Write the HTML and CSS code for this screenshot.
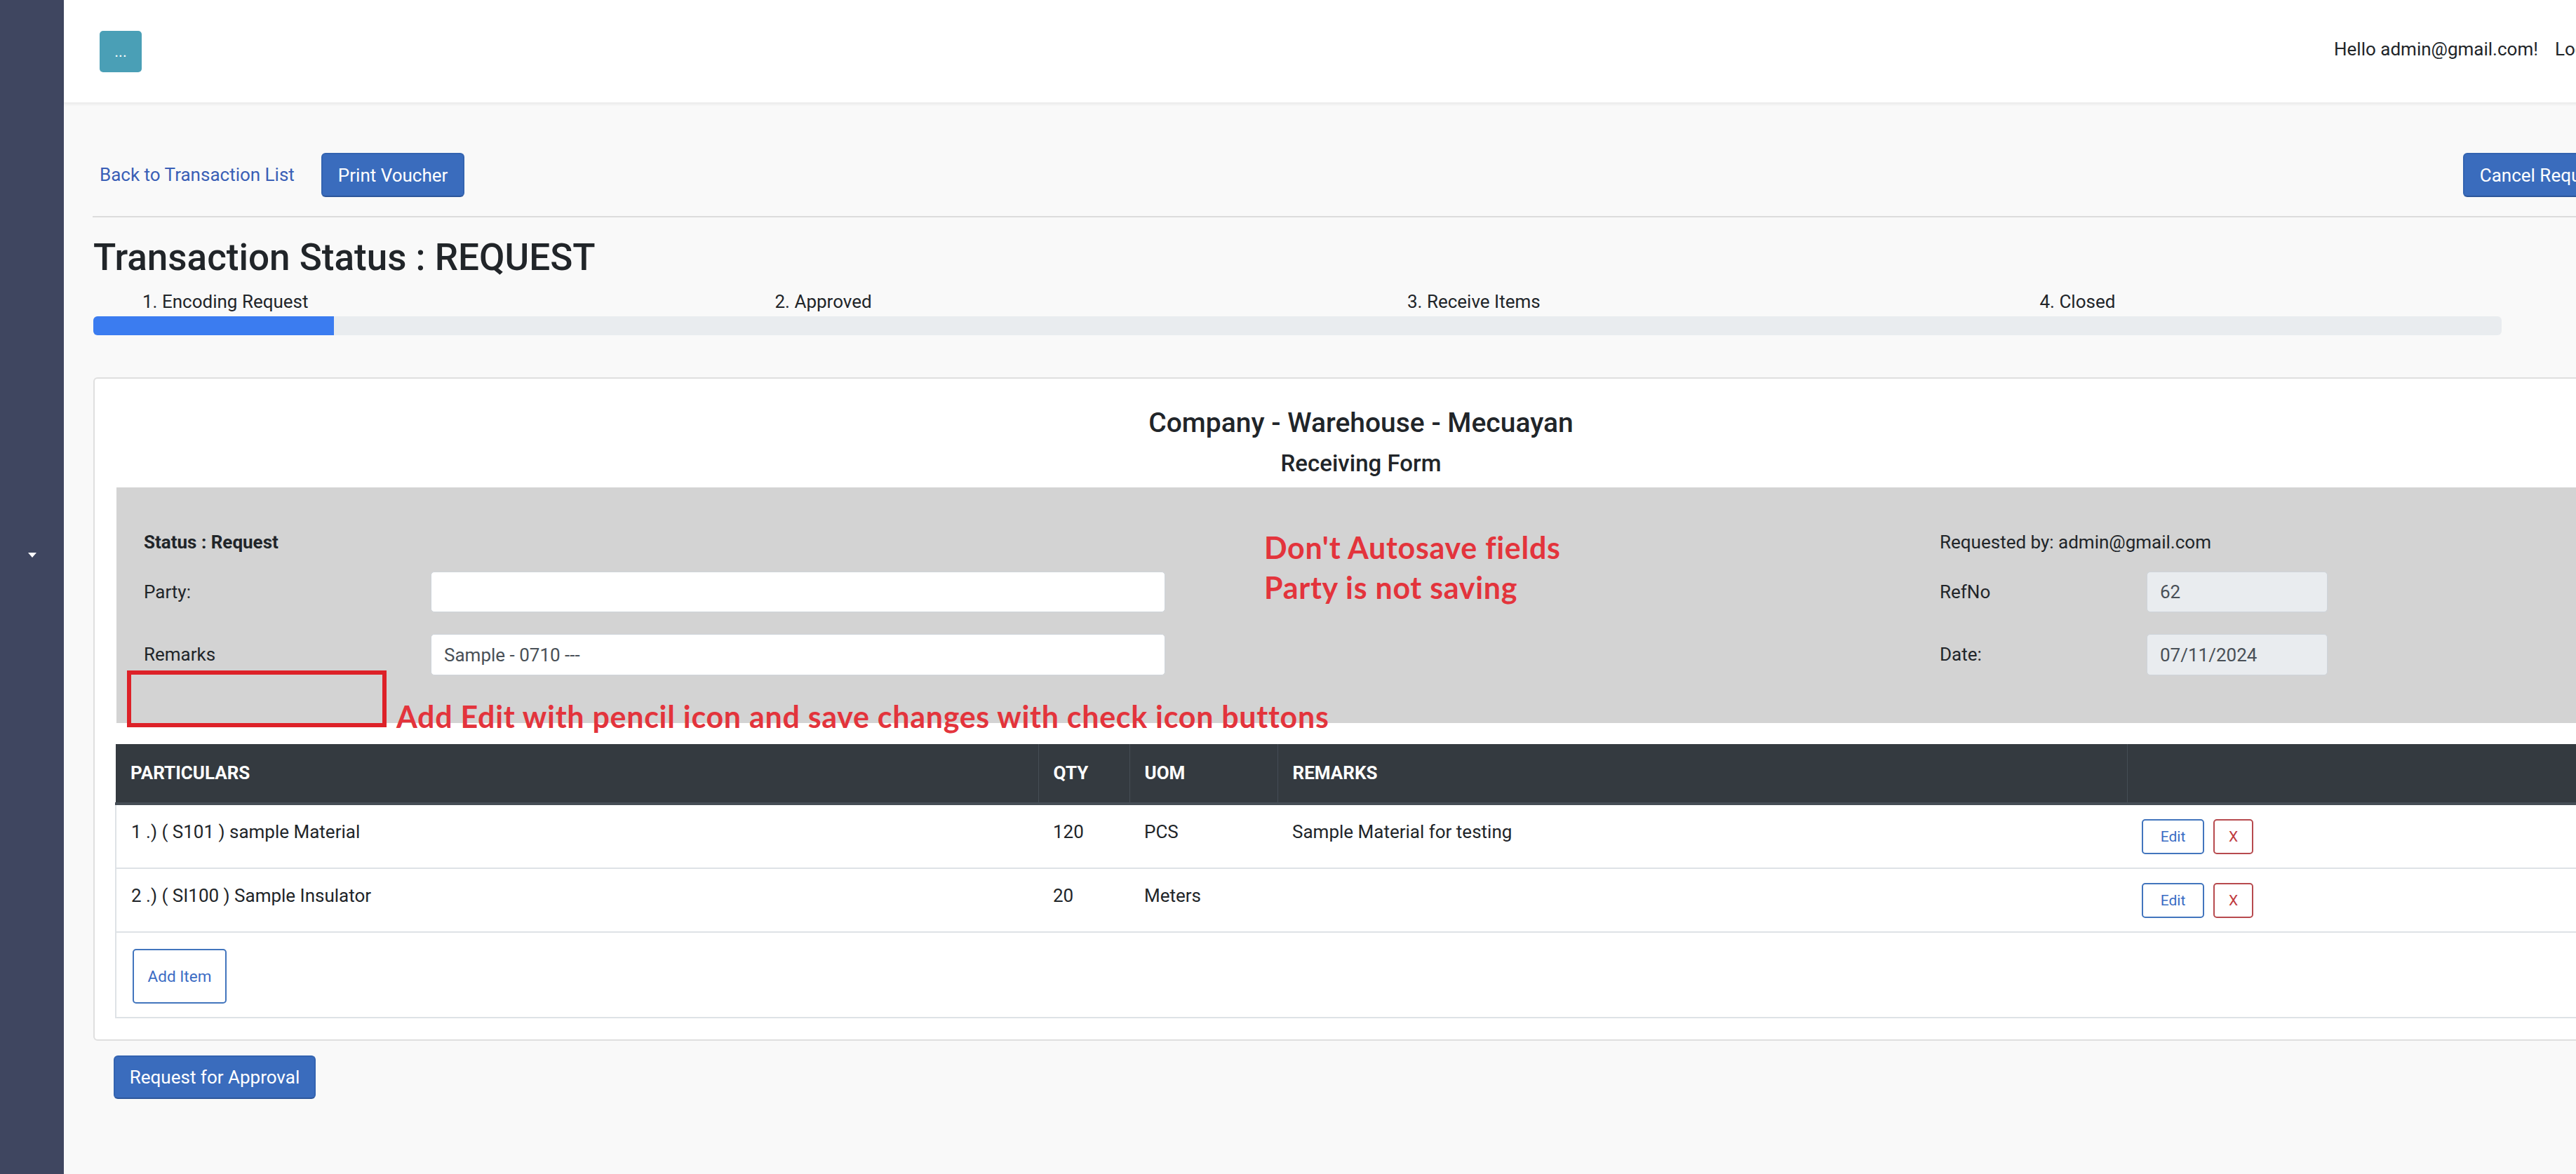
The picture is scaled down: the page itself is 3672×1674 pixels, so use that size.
FILE: index.html
```html
<!DOCTYPE html>
<html lang="en">
<head>
<meta charset="utf-8">
<title>Transaction Status</title>
<link rel="stylesheet" href="styles.css">
</head>
<body>
<div class="app">
  <aside class="sidebar"><span class="caret"></span></aside>
  <div class="main">
    <header class="topbar">
      <button class="menu-btn">...</button>
      <div class="user"><span>Hello admin@gmail.com!</span><a class="logout" href="#">Logout</a></div>
    </header>
    <div class="content">
      <div class="actions">
        <a class="back-link" href="#">Back to Transaction List</a>
        <button class="btn btn-primary">Print Voucher</button>
        <button class="btn btn-primary cancel">Cancel Request</button>
      </div>
      <hr class="sep">
      <h1 class="title">Transaction Status : REQUEST</h1>
      <div class="steps">
        <span>1. Encoding Request</span>
        <span>2. Approved</span>
        <span>3. Receive Items</span>
        <span>4. Closed</span>
      </div>
      <div class="progress"><div class="progress-fill" style="width:10%"></div></div>

      <section class="card">
        <h2 class="company">Company - Warehouse - Mecuayan</h2>
        <h3 class="form-name">Receiving Form</h3>
        <div class="panel">
          <div class="status">Status : Request</div>
          <div class="req">Requested by: admin@gmail.com</div>
          <label class="lbl r2">Party:</label>
          <input class="field r2" type="text" value="">
          <label class="lbl r3">Remarks</label>
          <input class="field r3" type="text" value="Sample - 0710 ---">
          <label class="lbl-right r2">RefNo</label>
          <input class="field ro r2c" type="text" value="62" readonly>
          <label class="lbl-right r3">Date:</label>
          <input class="field ro r3c" type="text" value="07/11/2024" readonly>
          <div class="note note-mid">Don't Autosave fields<br>Party is not saving</div>
          <div class="mark-box"></div>
          <div class="note note-edit">Add Edit with pencil icon and save changes with check icon buttons</div>
        </div>

        <table class="items">
          <colgroup>
            <col class="c-part"><col class="c-qty"><col class="c-uom"><col class="c-rem"><col class="c-act">
          </colgroup>
          <thead>
            <tr><th>PARTICULARS</th><th>QTY</th><th>UOM</th><th>REMARKS</th><th></th></tr>
          </thead>
          <tbody>
            <tr>
              <td>1 .) ( S101 ) sample Material</td><td>120</td><td>PCS</td><td>Sample Material for testing</td>
              <td><button class="btn-sm btn-edit">Edit</button><button class="btn-sm btn-del">X</button></td>
            </tr>
            <tr>
              <td>2 .) ( SI100 ) Sample Insulator</td><td>20</td><td>Meters</td><td></td>
              <td><button class="btn-sm btn-edit">Edit</button><button class="btn-sm btn-del">X</button></td>
            </tr>
            <tr class="add-row">
              <td colspan="5"><button class="btn-add">Add Item</button></td>
            </tr>
          </tbody>
        </table>
      </section>

      <button class="btn btn-primary approve">Request for Approval</button>
    </div>
  </div>
</div>
</body>
</html>
```

FILE: styles.css
```css
html, body {
  margin: 0;
  padding: 0;
  overflow: hidden;
}
body {
  background: #f9f9f9;
  font-family: Roboto, "Liberation Sans", Arial, sans-serif;
  font-size: 26px;
  line-height: 1.5;
  color: #212529;
}
.app {
  display: flex;
  width: 3763px;
  min-height: 1674px;
}
.sidebar {
  flex: none;
  width: 91px;
  background: #3f4660;
  display: flex;
  justify-content: center;
  align-items: flex-start;
  padding-top: 788px;
  box-sizing: border-box;
}
.caret {
  width: 0;
  height: 0;
  border-left: 6px solid transparent;
  border-right: 6px solid transparent;
  border-top: 7px solid #fff;
}
.main {
  flex: none;
  width: 3672px;
}
.topbar {
  height: 147px;
  background: #fff;
  box-shadow: 0 2px 4px rgba(0, 0, 0, 0.06);
  border-bottom: 1px solid #ececec;
  box-sizing: border-box;
  display: flex;
  align-items: center;
  justify-content: space-between;
  padding: 0 40px 0 51px;
}
.menu-btn {
  width: 60px;
  height: 59px;
  background: #4a9fb6;
  border: none;
  border-radius: 5px;
  color: #fff;
  font-family: Roboto, sans-serif;
  font-size: 22px;
  line-height: 1;
  padding: 0;
  margin-top: 1px;
}
.user {
  display: flex;
  gap: 24px;
  margin-top: -6px;
}
.logout {
  color: #212529;
  text-decoration: none;
}
.content {
  padding: 0 16px 0 42px;
}
.actions {
  display: flex;
  align-items: center;
  height: 63px;
  margin-top: 71px;
}
.back-link {
  color: #3a5fb6;
  text-decoration: none;
  margin-left: 9px;
  margin-right: 38px;
}
.btn {
  font-family: Roboto, sans-serif;
  font-size: 26px;
  height: 63px;
  padding: 0 22px;
  border-radius: 6px;
  box-sizing: border-box;
  line-height: 1;
}
.btn-primary {
  background: #3a6cbd;
  color: #fff;
  border: 2px solid #3363b0;
  border-bottom-color: #2d569a;
}
.cancel {
  margin-left: auto;
  margin-right: 8px;
}
.sep {
  border: none;
  border-top: 2px solid #dcdcdc;
  margin: 27px 0 0 -1px;
}
.title {
  font-size: 53px;
  font-weight: 500;
  line-height: 1.2;
  margin: 26px 0 0;
}
.steps {
  display: grid;
  grid-template-columns: repeat(4, 901.5px);
  padding-left: 70px;
  margin-top: 12px;
  line-height: 37.5px;
}
.progress {
  width: 3433px;
  height: 27px;
  background: #e9ecef;
  border-radius: 6px;
  margin-top: 2px;
  overflow: hidden;
}
.progress-fill {
  height: 100%;
  background: #3b7cf0;
}
.card {
  margin-top: 60px;
  background: #fff;
  border: 2px solid #dfdfdf;
  border-radius: 6px;
  padding: 0 31px 30px;
}
.company {
  font-size: 39px;
  font-weight: 500;
  line-height: 1.2;
  text-align: center;
  margin: 40px 0 0;
}
.form-name {
  font-size: 33px;
  font-weight: 500;
  line-height: 1.2;
  text-align: center;
  margin: 14px 0 0;
}
.panel {
  position: relative;
  margin-top: 15px;
  background: #d3d3d3;
  padding: 60px 396px 68px 39px;
  display: grid;
  grid-template-columns: 409px 1047px 1104px 295px 258px;
  grid-template-rows: 29px 58px 59px;
  row-gap: 31px;
  align-items: center;
}
.status {
  grid-column: 1 / 3;
  grid-row: 1;
  align-self: start;
  font-weight: 700;
  line-height: 37.5px;
  height: 29px;
}
.req {
  grid-column: 4 / 6;
  grid-row: 1;
  align-self: start;
  line-height: 37.5px;
  height: 29px;
}
.lbl.r2 { grid-column: 1; grid-row: 2; }
.field.r2 { grid-column: 2; grid-row: 2; }
.lbl.r3 { grid-column: 1; grid-row: 3; }
.field.r3 { grid-column: 2; grid-row: 3; }
.lbl-right.r2 { grid-column: 4; grid-row: 2; }
.field.r2c { grid-column: 5; grid-row: 2; }
.lbl-right.r3 { grid-column: 4; grid-row: 3; }
.field.r3c { grid-column: 5; grid-row: 3; }
.field {
  height: 100%;
  box-sizing: border-box;
  border: 1px solid #ced4da;
  border-radius: 5px;
  background: #fff;
  font-family: Roboto, sans-serif;
  font-size: 26px;
  color: #495057;
  padding: 0 18px;
  width: 100%;
}
.field.ro {
  background: #e9ecef;
}
.note {
  font-family: Lato, "Open Sans", sans-serif;
  font-weight: 700;
  font-size: 43px;
  line-height: 57px;
  color: #e3343c;
  letter-spacing: 0.7px;
}
.note-mid {
  grid-column: 3;
  grid-row: 1 / 3;
  align-self: start;
  padding-left: 141px;
  margin-top: -3px;
  white-space: nowrap;
}
.mark-box {
  position: absolute;
  left: 15px;
  top: 261px;
  width: 370px;
  height: 81px;
  box-sizing: border-box;
  border: 6px solid #dd2128;
}
.note-edit {
  position: absolute;
  left: 399px;
  top: 298px;
  white-space: nowrap;
}
.items {
  margin: 30px -2px 0;
  width: calc(100% + 4px);
  border-collapse: collapse;
  table-layout: fixed;
}
.c-part { width: 1315px; }
.c-qty { width: 130px; }
.c-uom { width: 211px; }
.c-rem { width: 1211px; }
.items th {
  background: #343a40;
  color: #fff;
  font-weight: 700;
  text-align: left;
  height: 85px;
  padding: 0 21px;
  border-left: 1px solid #454d55;
  border-bottom: 4px solid #454d55;
  box-sizing: border-box;
}
.items th:first-child {
  border-left: none;
}
.items td {
  vertical-align: top;
  padding: 20px 21px 19px;
  border-bottom: 2px solid #dee2e6;
  line-height: 37.5px;
}
.items tr td:first-child {
  border-left: 2px solid #dee2e6;
}
.items tr td:last-child {
  border-right: 2px solid #dee2e6;
}
.btn-sm {
  height: 50px;
  background: #fff;
  border-radius: 5px;
  font-family: Roboto, sans-serif;
  font-size: 21px;
  line-height: 1;
  vertical-align: top;
  box-sizing: border-box;
}
.btn-edit {
  width: 89px;
  border: 2px solid #4275bd;
  color: #3b6cc4;
}
.btn-del {
  width: 57px;
  margin-left: 13px;
  border: 2px solid #b74a4e;
  color: #c03b40;
}
.add-row td {
  padding: 23px 23px 19px;
}
.btn-add {
  width: 134px;
  height: 78px;
  background: #fff;
  border: 2px solid #4275bd;
  color: #3b6cc4;
  border-radius: 5px;
  font-family: Roboto, sans-serif;
  font-size: 22.5px;
  line-height: 1;
  display: block;
}
.approve {
  display: block;
  margin: 21px 0 0 29px;
  width: 288px;
  height: 62px;
  padding: 0;
}
```
